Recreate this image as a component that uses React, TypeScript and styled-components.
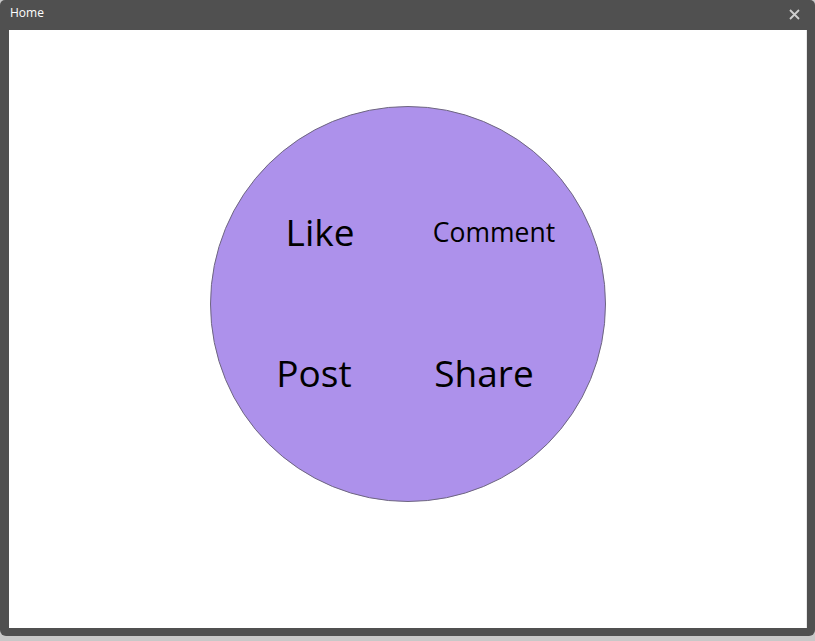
import React from "react";
import styled, { createGlobalStyle } from "styled-components";

const Global = createGlobalStyle`
  html, body { margin: 0; padding: 0; background: #c8c8c8; }
  body { font-family: "Open Sans", "Noto Sans", sans-serif; }
`;

const Window = styled.div`
  width: 815px;
  height: 636px;
  background: #505050;
  border-radius: 5px 5px 6px 6px;
  display: flex;
  flex-direction: column;
  box-sizing: border-box;
  padding: 0 8px 8px 9px;
`;

const TitleBar = styled.div`
  height: 30px;
  display: flex;
  align-items: center;
  justify-content: space-between;
  padding: 0 6px 0 1px;
  box-sizing: border-box;
`;

const Title = styled.span`
  color: #ffffff;
  font-family: "Open Sans", "Noto Sans", sans-serif;
  font-size: 12px;
  position: relative;
  top: -3px;
`;

const CloseButton = styled.button`
  background: none;
  border: 0;
  padding: 0;
  width: 14px;
  height: 14px;
  display: flex;
  align-items: center;
  justify-content: center;
  position: relative;
  top: -1px;
  cursor: pointer;
`;

const Content = styled.div`
  flex: 1;
  background: #ffffff;
  border-right: 1px solid #e8e8e8;
  display: flex;
  justify-content: center;
  padding-top: 76px;
  box-sizing: border-box;
`;

const Circle = styled.div`
  width: 396px;
  height: 396px;
  border-radius: 50%;
  background: #ad91eb;
  border: 1px solid #6e6680;
  box-sizing: border-box;
  display: grid;
  grid-template-columns: 1fr 1fr;
  grid-template-rows: 64px 64px;
  row-gap: 77px;
  align-content: start;
  padding-top: 93px;
`;

const Label = styled.div<{ $size: number; $dx: number; $dy?: number }>`
  font-family: "Open Sans", "Noto Sans", sans-serif;
  font-size: ${(p) => p.$size}px;
  color: #000000;
  line-height: 64px;
  height: 64px;
  text-align: center;
  white-space: nowrap;
  transform: translate(${(p) => p.$dx}px, ${(p) => p.$dy ?? 0}px);
`;

export default function App() {
  return (
    <>
      <Global />
      <Window>
        <TitleBar>
          <Title>Home</Title>
          <CloseButton aria-label="Close">
            <svg width="11" height="11" viewBox="0 0 11 11">
              <path d="M1 1 L10 10 M10 1 L1 10" stroke="#cfcfcf" strokeWidth="1.8" />
            </svg>
          </CloseButton>
        </TitleBar>
        <Content>
          <Circle>
            <Label $size={37} $dx={11}>Like</Label>
            <Label $size={26.5} $dx={-12} $dy={0}>Comment</Label>
            <Label $size={37} $dx={5}>Post</Label>
            <Label $size={37} $dx={-22}>Share</Label>
          </Circle>
        </Content>
      </Window>
    </>
  );
}
